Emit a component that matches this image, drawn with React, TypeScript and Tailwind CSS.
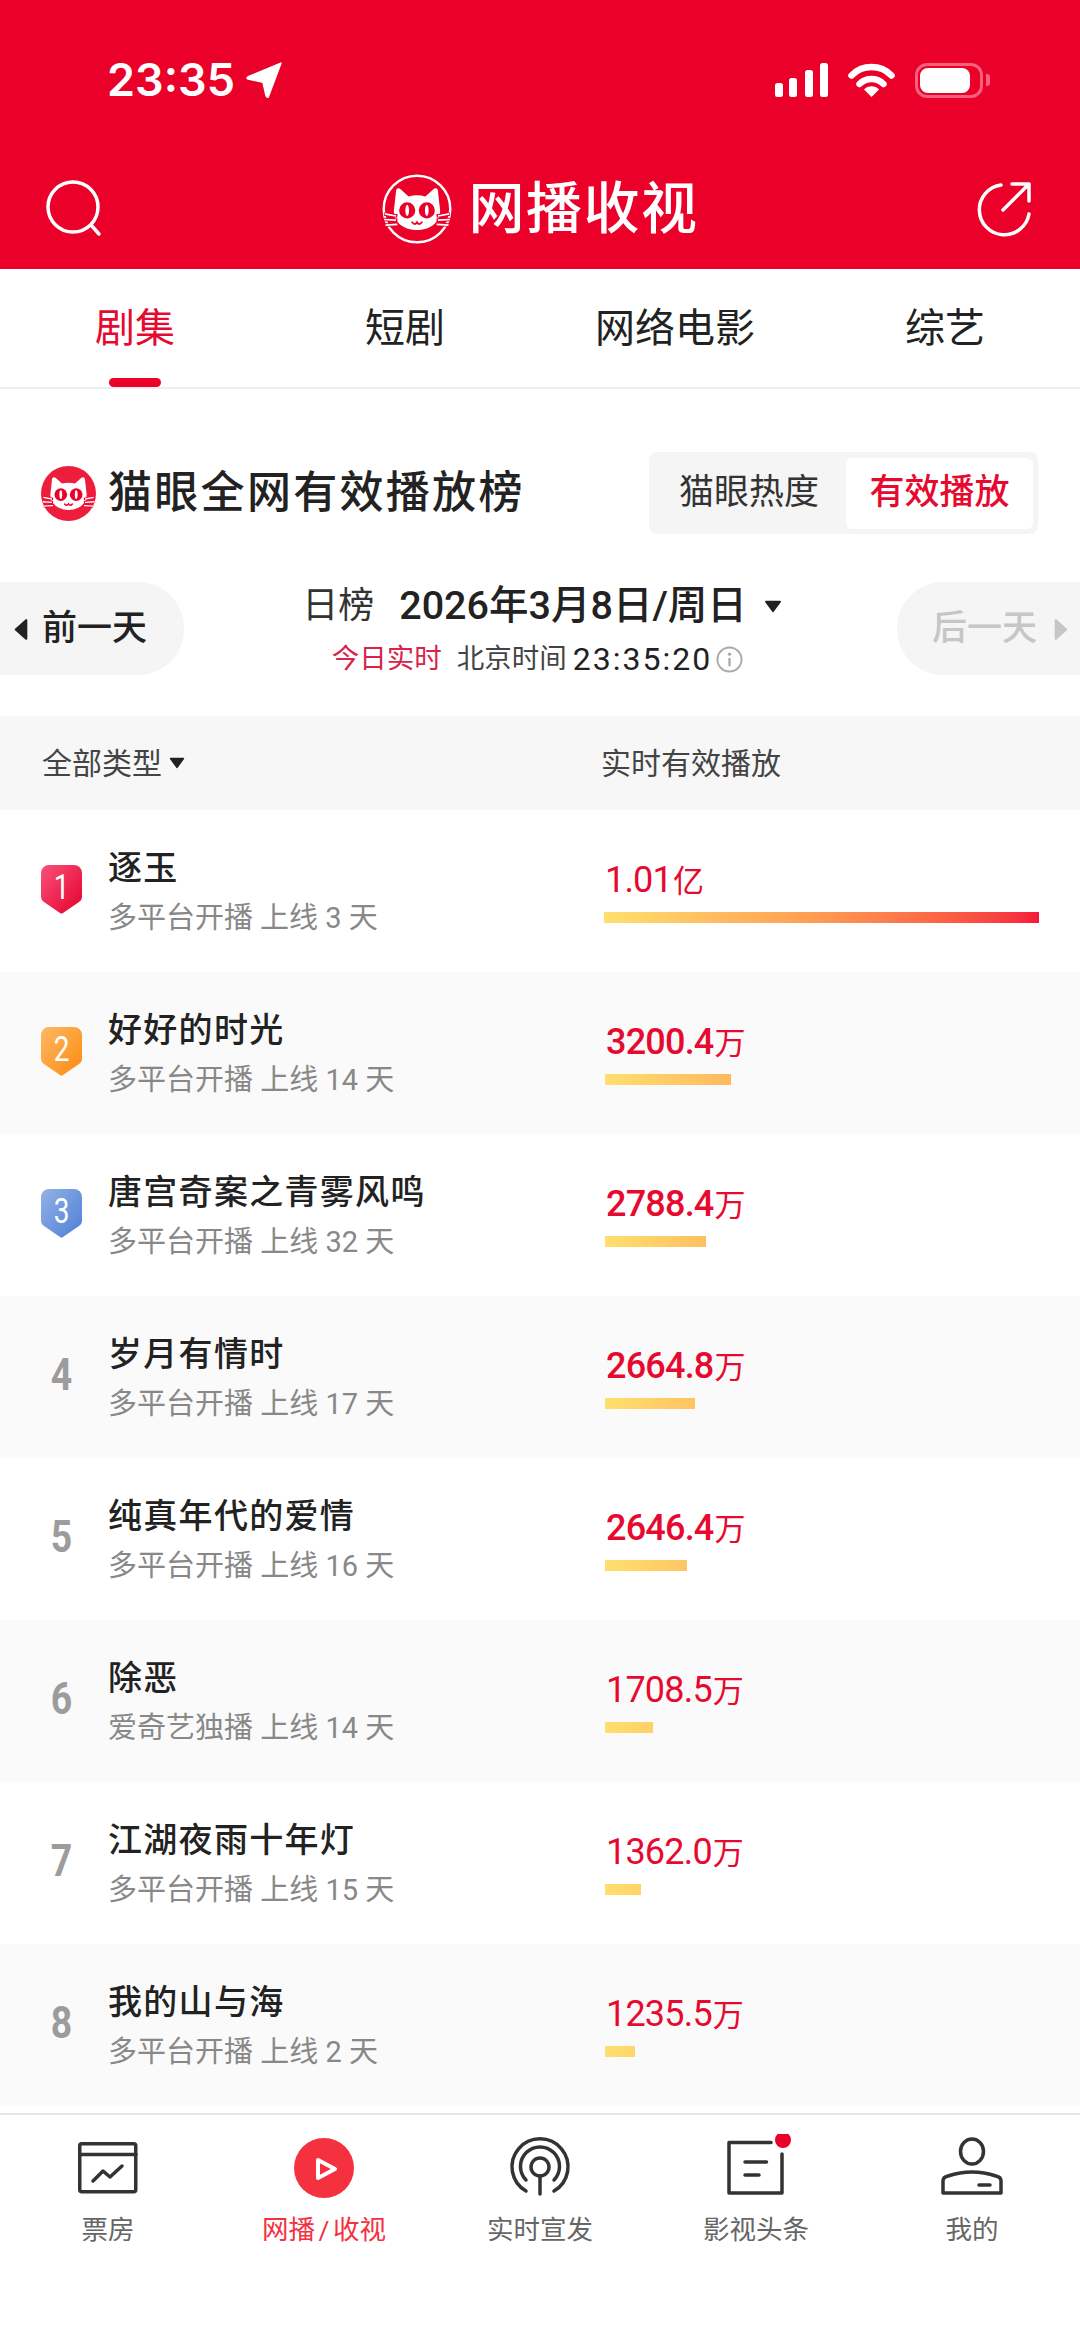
import type { ReactNode } from 'react'

const RED = '#ea0029'

const rows = [
  { name: '逐玉', sub: '多平台开播 上线 3 天', value: '1.01', unit: '亿', bar: 435 },
  { name: '好好的时光', sub: '多平台开播 上线 14 天', value: '3200.4', unit: '万', bar: 126 },
  { name: '唐宫奇案之青雾风鸣', sub: '多平台开播 上线 32 天', value: '2788.4', unit: '万', bar: 101 },
  { name: '岁月有情时', sub: '多平台开播 上线 17 天', value: '2664.8', unit: '万', bar: 90 },
  { name: '纯真年代的爱情', sub: '多平台开播 上线 16 天', value: '2646.4', unit: '万', bar: 82 },
  { name: '除恶', sub: '爱奇艺独播 上线 14 天', value: '1708.5', unit: '万', bar: 48 },
  { name: '江湖夜雨十年灯', sub: '多平台开播 上线 15 天', value: '1362.0', unit: '万', bar: 36 },
  { name: '我的山与海', sub: '多平台开播 上线 2 天', value: '1235.5', unit: '万', bar: 30 },
]

const badges = [
  { id: 'b1', from: '#f9527a', to: '#e4002b' },
  { id: 'b2', from: '#ffb964', to: '#fb8a10' },
  { id: 'b3', from: '#93b2e5', to: '#4d7ed8' },
]

function CatLogo({ ring, className }: { ring?: boolean; className: string }) {
  return (
    <svg viewBox="0 0 100 100" className={className}>
      {ring ? (
        <circle cx="50" cy="50" r="47.5" fill="none" stroke="#fff" strokeWidth="3.5" />
      ) : (
        <circle cx="50" cy="50" r="50" fill="#ee1c3d" />
      )}
      <path
        d="M20 25C20 20 24 19 27 22L38 32C46 30 54 30 62 32L73 22C76 19 80 20 80 25L83 52C84 69 68 80 50 80C32 80 16 69 17 52Z"
        fill="#fff"
      />
      <circle cx="36" cy="52" r="11.5" fill={RED} />
      <circle cx="64" cy="52" r="11.5" fill={RED} />
      <ellipse cx="36" cy="52" rx="2.6" ry="8" fill="#fff" />
      <ellipse cx="64" cy="52" rx="2.6" ry="8" fill="#fff" />
      <path d="M43 69Q47 74 50 69Q53 74 57 69" fill="none" stroke={RED} strokeWidth="2.6" strokeLinecap="round" />
      <g stroke={RED} strokeWidth="5">
        <path d="M3 57L22 60M3 65L22 66M5 73L24 72M97 57L78 60M97 65L78 66M95 73L76 72" />
      </g>
      <g stroke="#fff" strokeWidth="2.4">
        <path d="M4 57L20 60M3 65L20 66M5 73L22 72M96 57L80 60M97 65L80 66M95 73L78 72" />
      </g>
    </svg>
  )
}

function Tri({ dir, color, className }: { dir: 'left' | 'right' | 'down'; color: string; className: string }) {
  const pts = dir === 'left' ? '11,2 11,18 2,10' : dir === 'right' ? '2,2 2,18 11,10' : '2,3 18,3 10,14'
  const box = dir === 'down' ? '0 0 20 17' : '0 0 13 20'
  return (
    <svg viewBox={box} className={className}>
      <polygon points={pts} fill={color} stroke={color} strokeWidth="2" strokeLinejoin="round" />
    </svg>
  )
}

function Rank({ n }: { n: number }) {
  if (n <= 3) {
    const b = badges[n - 1]
    return (
      <svg viewBox="0 0 41 49" className="w-[41px] h-[49px]">
        <defs>
          <linearGradient id={b.id} x1="0" y1="0" x2="1" y2="1">
            <stop offset="0" stopColor={b.from} />
            <stop offset="1" stopColor={b.to} />
          </linearGradient>
        </defs>
        <path
          d="M8 0H33A8 8 0 0 1 41 8V32Q41 35 38 37L22 48Q20.500 49 19 48L3 37Q0 35 0 32V8A8 8 0 0 1 8 0Z"
          fill={`url(#${b.id})`}
        />
        <text x="20.500" y="34" textAnchor="middle" fill="#fff" fontSize="35" fontFamily="Roboto" transform="translate(4.100 0) scale(0.8 1)">
          {n}
        </text>
      </svg>
    )
  }
  return <span className="block text-[44px] leading-none font-bold text-[#9c9c9c] text-center scale-x-[0.85]">{n}</span>
}

function Row({ n, row }: { n: number; row: (typeof rows)[number] }) {
  return (
    <div className={`flex h-[162px] ${n % 2 === 0 ? 'bg-[#fafafa]' : 'bg-white'}`}>
      <div className="w-[108px] pl-[41px] flex items-center pb-[4px]">
        <div className="w-[41px]">
          <Rank n={n} />
        </div>
      </div>
      <div className="w-[497px] pt-[36px]">
        <div className="text-[34px] leading-[44px] font-medium text-[#222] tracking-[1.300px]">{row.name}</div>
        <div className="mt-[10px] text-[29px] leading-[36px] text-[#888]">{row.sub}</div>
      </div>
      <div className="flex-1 pt-[48px] pr-[41px]">
        <div className="pl-[1px] text-[#e60a30] leading-[44px] flex items-baseline">
          <span className={`text-[36px] tracking-[-0.800px] ${n >= 2 && n <= 5 ? 'font-medium' : ''}`}>{row.value}</span>
          <span className="text-[31px] ml-[1px]">{row.unit}</span>
        </div>
        <div className="mt-[8px] h-[11px] overflow-hidden" style={{ width: row.bar }}>
          <div className="w-[435px] h-full bg-gradient-to-r from-[#ffdf6e] via-[#ff9a52] to-[#f5173c]" />
        </div>
      </div>
    </div>
  )
}

function Tab({ icon, label, active }: { icon: ReactNode; label: string; active?: boolean }) {
  return (
    <div className="flex flex-col items-center">
      {icon}
      <div className={`mt-[14px] text-[26.500px] leading-[36px] [word-spacing:-3px] ${active ? 'text-[#f5303f]' : 'text-[#666]'}`}>{label}</div>
    </div>
  )
}

function NavIcon({ children }: { children: ReactNode }) {
  return (
    <svg viewBox="0 0 70 64" className="w-[70px] h-[64px]">
      <g
        transform="translate(5 1)"
        fill="none"
        stroke="#333"
        strokeWidth="3.500"
        strokeLinecap="round"
        strokeLinejoin="round"
      >
        {children}
      </g>
    </svg>
  )
}

export default function App() {
  return (
    <div className="w-[1080px] h-[2341px] bg-white overflow-hidden flex flex-col font-['Roboto','Noto_Sans_CJK_SC',sans-serif]">
      <header className="h-[269px] bg-[#ea0029] text-white shrink-0">
        <div className="h-[160px] pt-[54px] pl-[107px] pr-[90px] flex items-start justify-between">
          <div className="flex items-center gap-[10px] h-[52px]">
            <span className="text-[45px] leading-[52px] font-semibold font-['Inter',sans-serif]">23:35</span>
            <svg viewBox="0 0 36 36" className="w-[38px] h-[38px]">
              <path d="M34 2L22 34Q21 35 20 33L17 20L3 17Q1 16 3 15Z" fill="#fff" stroke="#fff" strokeWidth="1.500" strokeLinejoin="round" />
            </svg>
          </div>
          <div className="flex items-center h-[52px] pb-[0px]">
            <svg viewBox="0 0 53 34" className="w-[53px] h-[34px]">
              <rect x="0" y="20" width="8" height="14" rx="2.500" fill="#fff" />
              <rect x="14" y="15" width="8" height="19" rx="2.500" fill="#fff" />
              <rect x="30" y="7" width="8" height="27" rx="2.500" fill="#fff" />
              <rect x="45" y="0" width="8" height="34" rx="2.500" fill="#fff" />
            </svg>
            <svg viewBox="0 0 47 34" className="ml-[20px] w-[47px] h-[34px]">
              <path d="M3.500 12.500A28 28 0 0 1 43.500 12.500" fill="none" stroke="#fff" strokeWidth="6.500" strokeLinecap="round" />
              <path d="M11.500 21A17 17 0 0 1 35.500 21" fill="none" stroke="#fff" strokeWidth="6.500" strokeLinecap="round" />
              <path d="M16 26.500A10.500 10.500 0 0 1 31 26.500L23.500 34Z" fill="#fff" />
            </svg>
            <div className="ml-[20px] relative w-[68px] h-[35px] rounded-[12px] border-[3px] border-[#f9607c] p-[2px]">
              <div className="w-[50px] h-full rounded-[8px] bg-white" />
            </div>
            <div className="ml-[3px] w-[4px] h-[12px] rounded-r-[3px] bg-[#f9607c]" />
          </div>
        </div>
        <div className="h-[109px] pb-[12px] pl-[44px] pr-[48px] flex items-center justify-between">
          <svg viewBox="0 0 60 60" className="w-[60px] h-[60px]">
            <circle cx="29" cy="28" r="25" fill="none" stroke="#fff" strokeWidth="3.500" />
            <path d="M47 46L55 55" stroke="#fff" strokeWidth="3.500" strokeLinecap="round" />
          </svg>
          <div className="flex items-center">
            <CatLogo ring className="w-[70px] h-[70px]" />
            <span className="ml-[17px] text-[56px] leading-[70px] font-medium tracking-[1.500px]">网播收视</span>
          </div>
          <svg viewBox="0 0 56 56" className="w-[56px] h-[56px]">
            <path
              d="M25 4A25 25 0 1 0 53 33M27 29L53 3M36 3H53V20"
              fill="none"
              stroke="#fff"
              strokeWidth="3.500"
              strokeLinecap="round"
              strokeLinejoin="round"
            />
          </svg>
        </div>
      </header>

      <nav className="h-[120px] shrink-0 grid grid-cols-4 border-b-[2px] border-[#eeeeee] text-[40px] text-[#222]">
        <div className="relative flex justify-center pt-[30px] text-[#e60a30] leading-[60px]">
          剧集
          <div className="absolute bottom-0 left-[109px] w-[52px] h-[9px] rounded-full bg-[#ea0029]" />
        </div>
        <div className="flex justify-center pt-[30px] leading-[60px]">短剧</div>
        <div className="flex justify-center pt-[30px] leading-[60px]">网络电影</div>
        <div className="flex justify-center pt-[30px] leading-[60px]">综艺</div>
      </nav>

      <section className="h-[327px] shrink-0 pt-[63px]">
        <div className="h-[82px] pl-[41px] pr-[42px] flex items-center justify-between">
          <div className="flex items-center">
            <CatLogo className="w-[55px] h-[55px]" />
            <h1 className="ml-[12px] text-[44px] leading-[60px] font-medium text-[#222] tracking-[2.300px]">猫眼全网有效播放榜</h1>
          </div>
          <div className="w-[389px] h-[82px] rounded-[8px] bg-[#f5f5f5] flex items-center pr-[5px] pl-[30px] justify-between">
            <span className="text-[35px] text-[#333]">猫眼热度</span>
            <span className="w-[187px] h-[71px] rounded-[6px] bg-white text-[35px] font-medium text-[#e60a30] flex items-center justify-center">有效播放</span>
          </div>
        </div>

        <div className="mt-[48px] h-[93px] flex">
          <div className="w-[184px] rounded-r-[46px] bg-[#f5f5f5] flex items-center pl-[13px] pt-[2px] text-[35px] font-medium text-[#222]">
            <Tri dir="left" color="#222" className="w-[16px] h-[23px] mr-[13px]" />
            前一天
          </div>
          <div className="flex-1 flex flex-col items-center mt-[-3px]">
            <div className="flex items-center h-[54px] pl-[3px]">
              <span className="text-[36px] text-[#333]">日榜</span>
              <span className="ml-[25px] text-[39.500px] font-medium text-[#222]">2026年3月8日/周日</span>
              <Tri dir="down" color="#222" className="ml-[17px] w-[18px] h-[15px]" />
            </div>
            <div className="flex items-center h-[38px] mt-[7px] pr-[6px]">
              <span className="text-[27.500px] text-[#d8234a]">今日实时</span>
              <span className="ml-[15px] text-[27.500px] text-[#444]">北京时间</span>
              <span className="ml-[6px] text-[32px] text-[#222] tracking-[2px]">23:35:20</span>
              <svg viewBox="0 0 28 28" className="ml-[4px] w-[27px] h-[27px]">
                <circle cx="14" cy="14" r="12.500" fill="none" stroke="#aaa" strokeWidth="2" />
                <circle cx="14" cy="8.500" r="1.700" fill="#aaa" />
                <path d="M14 12.500V21" stroke="#aaa" strokeWidth="2.400" />
              </svg>
            </div>
          </div>
          <div className="w-[183px] rounded-l-[46px] bg-[#f5f5f5] flex items-center pl-[35px] pt-[2px] text-[35px] font-medium text-[#c6c6c6]">
            后一天
            <Tri dir="right" color="#c6c6c6" className="w-[16px] h-[23px] ml-[16px]" />
          </div>
        </div>
      </section>

      <div className="h-[94px] shrink-0 bg-[#f7f7f7] flex items-center text-[#444]">
        <div className="w-[601px] pl-[42px] flex items-center">
          <span className="text-[30px]">全部类型</span>
          <Tri dir="down" color="#222" className="ml-[7px] w-[16px] h-[14px]" />
        </div>
        <span className="text-[30px]">实时有效播放</span>
      </div>

      <div className="shrink-0">
        {rows.map((row, i) => (
          <Row key={row.name} n={i + 1} row={row} />
        ))}
      </div>

      <div className="h-[7px] shrink-0" />

      <footer className="flex-1 border-t-[2px] border-[#e6e6e6] grid grid-cols-5 pt-[19px] items-start">
        <Tab
          label="票房"
          icon={
            <NavIcon>
              <rect x="1.750" y="8.750" width="56" height="48" rx="2" />
              <path d="M2 19.500H58M15 46L25 36L32 42L44 31" />
            </NavIcon>
          }
        />
        <Tab
          active
          label="网播 / 收视"
          icon={
            <NavIcon>
              <circle cx="30" cy="33" r="30" fill="#f5303f" stroke="none" />
              <path d="M24 25L41 34L24 43Z" stroke="#fff" strokeWidth="4" />
            </NavIcon>
          }
        />
        <Tab
          label="实时宣发"
          icon={
            <NavIcon>
              <path d="M16 56A28 28 0 1 1 44 56M16 45A19.500 19.500 0 1 1 44 45" />
              <circle cx="30" cy="32" r="9" />
              <path d="M30 41V59" />
            </NavIcon>
          }
        />
        <Tab
          label="影视头条"
          icon={
            <NavIcon>
              <path d="M45 7.500H3V58H56V19M19 27H40.500M19 40H33" />
              <circle cx="57" cy="5" r="8" fill="#ea0029" stroke="none" />
            </NavIcon>
          }
        />
        <Tab
          label="我的"
          icon={
            <NavIcon>
              <ellipse cx="30" cy="16.500" rx="11.500" ry="12.500" />
              <path d="M1 58V46Q1 42 6 41Q30 33 54 41Q59 42 59 46V58ZM37 50H48" />
            </NavIcon>
          }
        />
      </footer>
    </div>
  )
}
